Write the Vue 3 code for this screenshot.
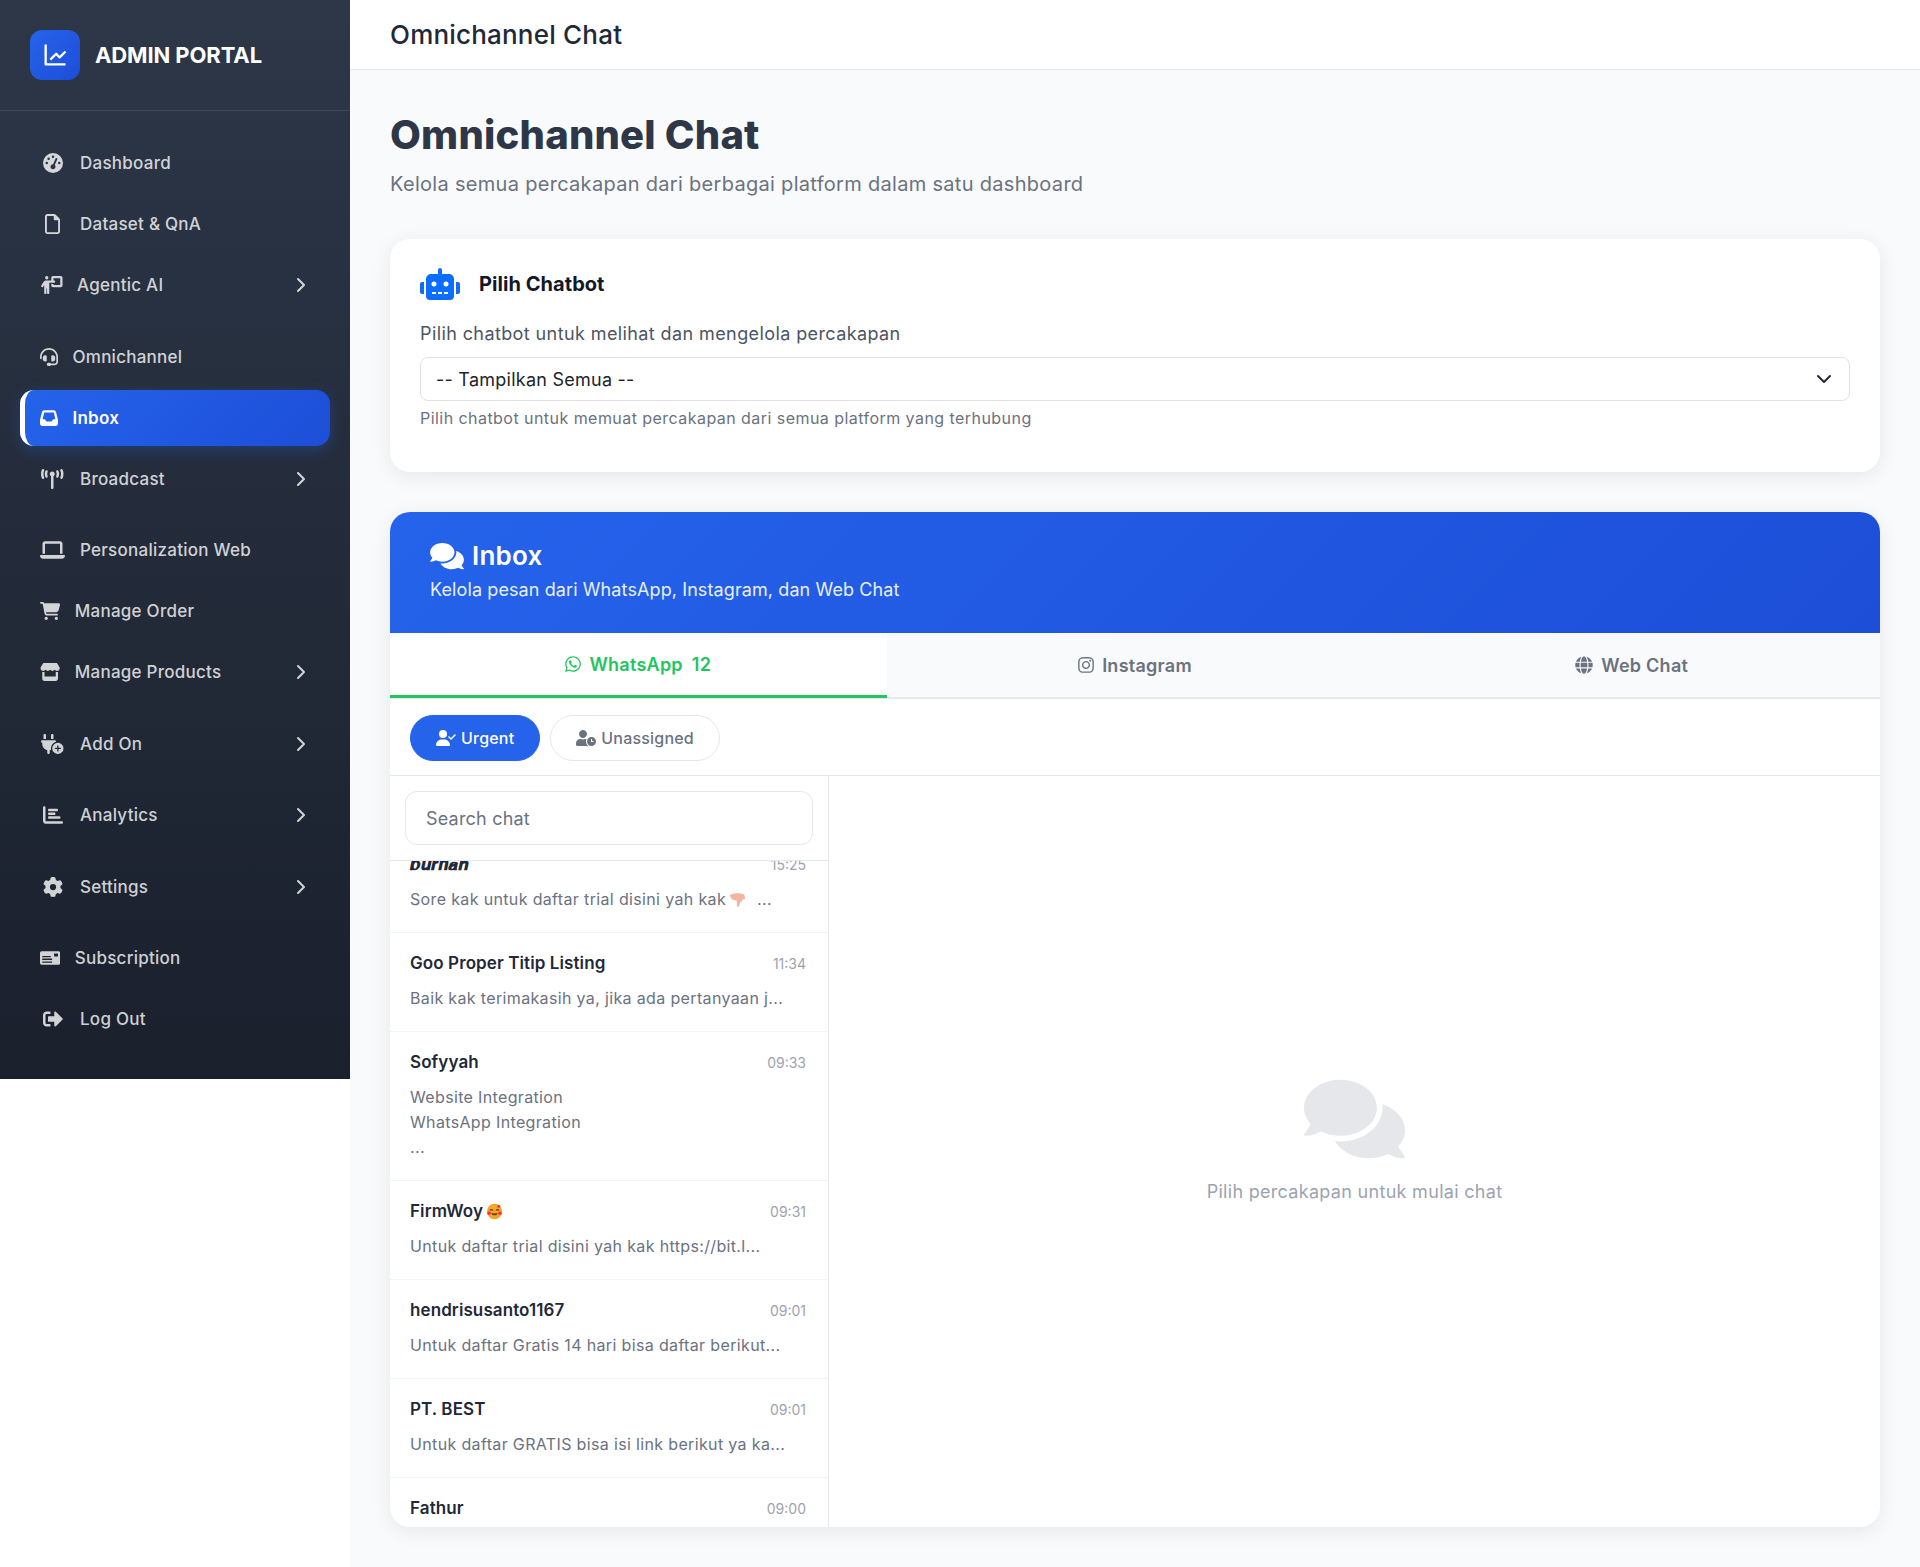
<template>
  <div class="app">
    <aside class="sidebar">
      <div class="brand">
        <div class="brand-logo">
          <svg viewBox="0 0 24 24" width="28" height="28" fill="currentColor">
            <path d="M3 3v17a1 1 0 0 0 1 1h17v-2H5V3H3z" />
            <path d="M15.293 14.707a.999.999 0 0 0 1.414 0l5-5-1.414-1.414L16 12.586l-2.293-2.293a.999.999 0 0 0-1.414 0l-5 5 1.414 1.414L13 12.414l2.293 2.293z" />
          </svg>
        </div>
        <span class="brand-name">ADMIN PORTAL</span>
      </div>
      <nav class="nav">
        <a
          v-for="item in navItems"
          :key="item.label"
          class="nav-item"
          :class="{ active: item.active, drop: item.drop }"
        >
          <span class="nav-icon" :class="item.big ? 'big' : 'small'">
            <svg :viewBox="`0 0 ${item.w} 512`" :height="item.big ? 20 : 18" :width="(item.w / 512) * (item.big ? 20 : 18)" fill="currentColor">
              <path :d="item.d" />
            </svg>
          </span>
          <span class="nav-label">{{ item.label }}</span>
          <svg v-if="item.drop" class="chev" viewBox="0 0 24 24" width="24" height="24" fill="none" stroke="currentColor" stroke-width="2" stroke-linecap="round" stroke-linejoin="round">
            <path d="M9 6l6 6-6 6" />
          </svg>
        </a>
      </nav>
    </aside>

    <div class="content">
      <header class="topbar">Omnichannel Chat</header>
      <main class="main">
        <h1>Omnichannel Chat</h1>
        <p class="subtitle">Kelola semua percakapan dari berbagai platform dalam satu dashboard</p>

        <section class="card bot-card">
          <div class="bot-head">
            <svg viewBox="0 0 640 512" width="40" height="32" fill="#0d6efd">
              <path d="M32,224H64V416H32A31.96166,31.96166,0,0,1,0,384V256A31.96166,31.96166,0,0,1,32,224Zm512-48V448a64.06328,64.06328,0,0,1-64,64H160a64.06328,64.06328,0,0,1-64-64V176a79.974,79.974,0,0,1,80-80H288V32a32,32,0,0,1,64,0V96H464A79.974,79.974,0,0,1,544,176ZM264,256a40,40,0,1,0-40,40A39.997,39.997,0,0,0,264,256Zm-8,128H192v32h64Zm96,0H288v32h64ZM456,256a40,40,0,1,0-40,40A39.997,39.997,0,0,0,456,256Zm-8,128H384v32h64ZM640,256V384a31.96166,31.96166,0,0,1-32,32H576V224h32A31.96166,31.96166,0,0,1,640,256Z" />
            </svg>
            <h2>Pilih Chatbot</h2>
          </div>
          <p class="bot-desc">Pilih chatbot untuk melihat dan mengelola percakapan</p>
          <div class="select-wrap">
            <select class="select">
              <option>-- Tampilkan Semua --</option>
            </select>
            <svg class="select-arrow" viewBox="0 0 16 16" width="16" height="16" fill="none" stroke="#1f2937" stroke-width="2" stroke-linecap="round" stroke-linejoin="round">
              <path d="M2 5l6 6 6-6" />
            </svg>
          </div>
          <p class="bot-help">Pilih chatbot untuk memuat percakapan dari semua platform yang terhubung</p>
        </section>

        <section class="card inbox">
          <div class="inbox-head">
            <h2>
              <svg viewBox="0 0 576 512" width="34" height="30" fill="currentColor"><path :d="commentsPath" /></svg>
              Inbox
            </h2>
            <p>Kelola pesan dari WhatsApp, Instagram, dan Web Chat</p>
          </div>

          <div class="tabs">
            <button class="tab on">
              <svg viewBox="0 0 448 512" width="16" height="18" fill="currentColor"><path d="M380.9 97.1C339 55.1 283.2 32 223.9 32c-122.4 0-222 99.6-222 222 0 39.1 10.2 77.3 29.6 111L0 480l117.7-30.9c32.4 17.7 68.9 27 106.1 27h.1c122.3 0 224.1-99.6 224.1-222 0-59.3-25.2-115-67.1-157zm-157 341.6c-33.2 0-65.7-8.9-94-25.7l-6.7-4-69.8 18.3L72 359.2l-4.4-7c-18.5-29.4-28.2-63.3-28.2-98.2 0-101.7 82.8-184.5 184.6-184.5 49.3 0 95.6 19.2 130.4 54.1 34.8 34.9 56.2 81.2 56.1 130.5 0 101.8-84.9 184.6-186.6 184.6zm101.2-138.2c-5.5-2.8-32.8-16.2-37.9-18-5.1-1.9-8.8-2.8-12.5 2.8-3.7 5.6-14.3 18-17.6 21.8-3.2 3.7-6.5 4.2-12 1.4-32.6-16.3-54-29.1-75.5-66-5.7-9.8 5.7-9.1 16.3-30.3 1.8-3.7.9-6.9-.5-9.7-1.4-2.8-12.5-30.1-17.1-41.2-4.5-10.8-9.1-9.3-12.5-9.5-3.2-.2-6.9-.2-10.6-.2-3.7 0-9.7 1.4-14.8 6.9-5.1 5.6-19.4 19-19.4 46.3 0 27.3 19.9 53.7 22.6 57.4 2.8 3.7 39.1 59.7 94.8 83.8 35.2 15.2 49 16.5 66.6 13.9 10.7-1.6 32.8-13.4 37.4-26.4 4.6-13 4.6-24.1 3.2-26.4-1.3-2.5-5-3.9-10.5-6.6z" /></svg>
              <span>WhatsApp</span>
              <span class="tab-count">12</span>
            </button>
            <button class="tab">
              <svg viewBox="0 0 448 512" width="16" height="18" fill="currentColor"><path d="M224.1 141c-63.6 0-114.9 51.3-114.9 114.9s51.3 114.9 114.9 114.9S339 319.5 339 255.9 287.7 141 224.1 141zm0 189.6c-41.1 0-74.7-33.5-74.7-74.7s33.5-74.7 74.7-74.7 74.7 33.5 74.7 74.7-33.6 74.7-74.7 74.7zm146.4-194.3c0 14.9-12 26.8-26.8 26.8-14.9 0-26.8-12-26.8-26.8s12-26.8 26.8-26.8 26.8 12 26.8 26.8zm76.1 27.2c-1.7-35.9-9.9-67.7-36.2-93.9-26.2-26.2-58-34.4-93.9-36.2-37-2.1-147.9-2.1-184.9 0-35.8 1.7-67.6 9.9-93.9 36.1s-34.4 58-36.2 93.9c-2.1 37-2.1 147.9 0 184.9 1.7 35.9 9.9 67.7 36.2 93.9s58 34.4 93.9 36.2c37 2.1 147.9 2.1 184.9 0 35.9-1.7 67.7-9.9 93.9-36.2 26.2-26.2 34.4-58 36.2-93.9 2.1-37 2.1-147.8 0-184.8zM398.8 388c-7.8 19.6-22.9 34.7-42.6 42.6-29.5 11.7-99.5 9-132.1 9s-102.7 2.6-132.1-9c-19.6-7.8-34.7-22.9-42.6-42.6-11.7-29.5-9-99.5-9-132.1s-2.6-102.7 9-132.1c7.8-19.6 22.9-34.7 42.6-42.6 29.5-11.7 99.5-9 132.1-9s102.7-2.6 132.1 9c19.6 7.8 34.7 22.9 42.6 42.6 11.7 29.5 9 99.5 9 132.1s2.7 102.7-9 132.1z" /></svg>
              <span>Instagram</span>
            </button>
            <button class="tab">
              <svg viewBox="0 0 496 512" width="18" height="18" fill="currentColor"><path d="M336.5 160C322 70.7 287.8 8 248 8s-74 62.7-88.5 152h177zM152 256c0 22.2 1.2 43.5 3.3 64h185.3c2.1-20.5 3.3-41.8 3.3-64s-1.2-43.5-3.3-64H155.3c-2.1 20.5-3.3 41.8-3.3 64zm324.7-96c-28.6-67.9-86.5-120.4-158-141.6 24.4 33.8 41.2 84.7 50 141.6h108zM177.2 18.4C105.8 39.6 47.8 92.1 19.3 160h108c8.7-56.9 25.5-107.8 49.9-141.6zM487.4 192H372.7c2.1 21 3.3 42.5 3.3 64s-1.2 43-3.3 64h114.6c5.5-20.5 8.6-41.8 8.6-64s-3.1-43.5-8.5-64zM120 256c0-21.5 1.2-43 3.3-64H8.6C3.2 212.5 0 233.8 0 256s3.2 43.5 8.6 64h114.6c-2-21-3.2-42.5-3.2-64zm39.5 96c14.5 89.3 48.7 152 88.5 152s74-62.7 88.5-152h-177zm159.3 141.6c71.4-21.2 129.4-73.7 158-141.6h-108c-8.8 56.9-25.6 107.8-50 141.6zM19.3 352c28.6 67.9 86.5 120.4 158 141.6-24.4-33.8-41.2-84.7-50-141.6h-108z" /></svg>
              <span>Web Chat</span>
            </button>
          </div>

          <div class="filters">
            <button class="pill on">
              <svg viewBox="0 0 640 512" width="20" height="16" fill="currentColor"><path d="M96 128a128 128 0 1 1 256 0A128 128 0 1 1 96 128zM0 482.3C0 383.8 79.8 304 178.3 304h91.4C368.2 304 448 383.8 448 482.3c0 16.4-13.3 29.7-29.7 29.7H29.7C13.3 512 0 498.7 0 482.3zM625 177L497 305c-9.4 9.4-24.6 9.4-33.9 0l-64-64c-9.4-9.4-9.4-24.6 0-33.9s24.6-9.4 33.9 0L480 254.1 591 143c9.4-9.4 24.6-9.4 33.9 0s9.4 24.6 0 33.9z" /></svg>
              Urgent
            </button>
            <button class="pill">
              <svg viewBox="0 0 640 512" width="20" height="16" fill="currentColor"><path d="M496 224c-79.6 0-144 64.4-144 144s64.4 144 144 144 144-64.4 144-144-64.4-144-144-144zm64 150.3c0 5.3-4.4 9.7-9.7 9.7h-60.6c-5.3 0-9.7-4.4-9.7-9.7v-76.6c0-5.3 4.4-9.7 9.7-9.7h12.6c5.3 0 9.7 4.4 9.7 9.7V352h38.3c5.3 0 9.7 4.4 9.7 9.7v12.6zM320 368c0-27.8 6.7-54.1 18.2-77.5-8-1.5-16.2-2.5-24.6-2.5h-16.7c-22.2 10.2-46.9 16-72.9 16s-50.6-5.8-72.9-16h-16.7C60.2 288 0 348.2 0 422.4V464c0 26.5 21.5 48 48 48h347.1c-45.3-31.9-75.1-84.5-75.1-144zm-96-112c70.7 0 128-57.3 128-128S294.7 0 224 0 96 57.3 96 128s57.3 128 128 128z" /></svg>
              Unassigned
            </button>
          </div>

          <div class="chat">
            <div class="chat-left">
              <div class="search">
                <input type="text" placeholder="Search chat" />
              </div>
              <div ref="listEl" class="list">
                <!-- the list is scrolled: rows above and below are not in view -->
                <div class="list-gap-top"></div>
                <div v-for="chat in chats" :key="chat.name" class="row">
                  <div class="row-top">
                    <span class="row-name" :class="{ fancy: chat.fancy }">
                      {{ chat.name }}
                      <svg v-if="chat.face" class="emoji" viewBox="0 0 20 20" width="17" height="17">
                        <circle cx="10" cy="10" r="9" fill="#f6a623" />
                        <path d="M5 8.5c.8-1 2-1 2.8 0M12.2 8.5c.8-1 2-1 2.8 0" fill="none" stroke="#6b3a12" stroke-width="1.4" stroke-linecap="round" />
                        <path d="M6 12c1.6 3.4 6.4 3.4 8 0z" fill="#7a3b12" />
                        <circle cx="3.6" cy="12" r="2" fill="#e8344a" />
                        <circle cx="16.4" cy="12" r="2" fill="#e8344a" />
                        <circle cx="15" cy="3.8" r="1.8" fill="#e8344a" />
                      </svg>
                    </span>
                    <span class="row-time">{{ chat.time }}</span>
                  </div>
                  <div class="row-msg">
                    <div v-for="line in chat.lines" :key="line" class="row-line">
                      {{ line }}
                      <template v-if="chat.hand">
                        <svg class="emoji" viewBox="0 0 20 20" width="17" height="17">
                          <path d="M1 5c2-2 7-3 12-2 2 .4 3.400 1 5 1l1 5-3 1c-.5 2-1.500 3-3 3.500-.3 2-.5 4-1.600 5-1.500.6-2-1-2-3l-.2-4C6 11 2 10 1 5z" fill="#f2b5a0" />
                        </svg>
                        <span class="row-dots">...</span>
                      </template>
                    </div>
                  </div>
                </div>
                <div class="list-gap-bottom"></div>
              </div>
            </div>
            <div class="chat-empty">
              <svg viewBox="0 0 576 512" width="101" height="90" fill="#e5e7eb"><path :d="commentsPath" /></svg>
              <p>Pilih percakapan untuk mulai chat</p>
            </div>
          </div>
        </section>
      </main>
    </div>
  </div>
</template>

<script setup>
import { onMounted, ref } from 'vue'

const commentsPath = 'M416 192c0-88.4-93.1-160-208-160S0 103.6 0 192c0 34.3 14.1 65.9 38 92-13.4 30.2-35.5 54.2-35.8 54.5-2.2 2.3-2.8 5.7-1.5 8.7S4.8 352 8 352c36.6 0 66.9-12.3 88.7-25 32.2 15.7 70.3 25 111.3 25 114.9 0 208-71.6 208-160zm122 220c23.9-26 38-57.7 38-92 0-66.9-53.5-124.2-129.3-148.1.9 6.6 1.3 13.3 1.3 20.1 0 105.9-107.7 192-240 192-10.8 0-21.3-.8-31.7-1.9C207.8 439.6 281.8 480 368 480c41 0 79.1-9.2 111.3-25 21.8 12.7 52.1 25 88.7 25 3.2 0 6.1-1.9 7.3-4.8 1.3-2.9.7-6.3-1.5-8.7-.3-.3-22.4-24.2-35.8-54.5z'

const navItems = [
  { label: 'Dashboard', big: true, w: 512, d: 'M0 256a256 256 0 1 1 512 0A256 256 0 1 1 0 256zM288 96a32 32 0 1 0 -64 0 32 32 0 1 0 64 0zM256 416c35.3 0 64-28.7 64-64c0-17.4-6.9-33.1-18.1-44.6L366 161.7c5.3-12.1-.2-26.3-12.3-31.6s-26.3 .2-31.6 12.3L257.9 288c-.6 0-1.3 0-1.9 0c-35.3 0-64 28.7-64 64s28.7 64 64 64zM176 144a32 32 0 1 0 -64 0 32 32 0 1 0 64 0zM96 288a32 32 0 1 0 0-64 32 32 0 1 0 0 64zm352-32a32 32 0 1 0 -64 0 32 32 0 1 0 64 0z' },
  { label: 'Dataset & QnA', big: true, w: 384, d: 'M320 464c8.8 0 16-7.2 16-16V160H256c-17.7 0-32-14.3-32-32V48H64c-8.8 0-16 7.2-16 16V448c0 8.8 7.2 16 16 16H320zM0 64C0 28.7 28.7 0 64 0H229.5c17 0 33.3 6.7 45.3 18.7l90.5 90.5c12 12 18.7 28.3 18.7 45.3V448c0 35.3-28.7 64-64 64H64c-35.3 0-64-28.7-64-64V64z' },
  { label: 'Agentic AI', drop: true, w: 640, d: 'M192 96a48 48 0 1 0 0-96 48 48 0 1 0 0 96zm-8 384V352h16V480c0 17.7 14.3 32 32 32s32-14.3 32-32V192h56 64 16c17.7 0 32-14.3 32-32s-14.3-32-32-32H384V64H576V256H384V224H320v48c0 26.500 21.500 48 48 48H592c26.500 0 48-21.500 48-48V48c0-26.500-21.500-48-48-48H368c-26.500 0-48 21.500-48 48v80H243.100 177.100c-33.700 0-64.900 17.700-82.300 46.600l-58.300 97c-9.100 15.100-4.200 34.800 10.900 43.900s34.800 4.200 43.900-10.900L120 256.900V480c0 17.700 14.300 32 32 32s32-14.300 32-32z' },
  { label: 'Omnichannel', w: 512, d: 'M256 48C141.1 48 48 141.1 48 256v40c0 13.3-10.7 24-24 24s-24-10.7-24-24V256C0 114.6 114.6 0 256 0S512 114.6 512 256V400.100c0 48.600-39.400 88-88.100 88L313.600 488c-8.300 14.300-23.800 24-41.600 24H240c-26.500 0-48-21.500-48-48s21.500-48 48-48h32c17.800 0 33.300 9.700 41.600 24l110.400 .1c22.100 0 40-17.900 40-40V256c0-114.900-93.100-208-208-208zM144 208h16c17.700 0 32 14.300 32 32V352c0 17.700-14.300 32-32 32H144c-35.300 0-64-28.700-64-64V272c0-35.300 28.700-64 64-64zm224 0c35.300 0 64 28.700 64 64v48c0 35.300-28.700 64-64 64H352c-17.700 0-32-14.300-32-32V240c0-17.700 14.300-32 32-32h16z' },
  { label: 'Inbox', active: true, w: 512, d: 'M121 32C91.600 32 66 52 58.900 80.500L1.900 308.400C.6 313.500 0 318.700 0 323.900V416c0 35.300 28.700 64 64 64H448c35.300 0 64-28.700 64-64V323.900c0-5.200-.6-10.400-1.900-15.500l-57-227.900C446 52 420.400 32 391 32H121zm0 64H391l48 192H387.800c-12.100 0-23.200 6.800-28.600 17.700l-14.300 28.600c-5.400 10.800-16.500 17.700-28.600 17.700H195.800c-12.100 0-23.200-6.800-28.600-17.700l-14.300-28.600c-5.400-10.800-16.500-17.700-28.600-17.700H73L121 96z' },
  { label: 'Broadcast', big: true, drop: true, w: 576, d: 'M80.300 44C69.800 69.900 64 98.200 64 128s5.800 58.100 16.300 84c6.600 16.400-1.300 35-17.700 41.700s-35-1.300-41.700-17.700C7.400 202.600 0 166.100 0 128S7.400 53.400 20.900 20C27.600 3.600 46.200-4.300 62.600 2.300S86.900 27.600 80.300 44zM555.100 20C568.600 53.400 576 89.900 576 128s-7.400 74.600-20.900 108c-6.600 16.400-25.300 24.300-41.700 17.700S489.100 228.400 495.700 212c10.500-25.900 16.300-54.200 16.300-84s-5.800-58.100-16.300-84C489.100 27.600 497 9 513.400 2.300s35 1.300 41.700 17.700zM352 128c0 23.700-12.900 44.400-32 55.400V480c0 17.700-14.300 32-32 32s-32-14.300-32-32V183.400c-19.100-11.100-32-31.700-32-55.400c0-35.300 28.700-64 64-64s64 28.700 64 64zM170.600 76.800C163.800 92.400 160 109.700 160 128s3.800 35.600 10.600 51.200c7.100 16.200-.3 35.100-16.500 42.100s-35.100-.3-42.100-16.500c-10.300-23.600-16-49.600-16-76.800s5.700-53.200 16-76.800c7.100-16.200 25.900-23.600 42.100-16.500s23.600 25.900 16.500 42.100zM464 128c0 27.200-5.700 53.200-16 76.800c-7.100 16.200-25.900 23.600-42.100 16.500s-23.600-25.900-16.500-42.100c6.800-15.600 10.600-32.900 10.600-51.200s-3.800-35.600-10.600-51.200c-7.100-16.200 .3-35.100 16.500-42.100s35.100 .3 42.100 16.500c10.300 23.600 16 49.600 16 76.800z' },
  { label: 'Personalization Web', big: true, w: 640, d: 'M128 32C92.700 32 64 60.700 64 96V352h64V96H512V352h64V96c0-35.300-28.700-64-64-64H128zM19.200 384C8.600 384 0 392.600 0 403.200C0 445.600 34.400 480 76.800 480H563.200c42.400 0 76.800-34.400 76.800-76.800c0-10.600-8.600-19.200-19.200-19.200H19.200z' },
  { label: 'Manage Order', w: 576, d: 'M0 24C0 10.700 10.700 0 24 0H69.500c22 0 41.500 12.800 50.600 32h411c26.300 0 45.500 25 38.600 50.400l-41 152.300c-8.500 31.400-37 53.300-69.500 53.300H170.700l5.400 28.500c2.200 11.300 12.100 19.500 23.600 19.500H488c13.300 0 24 10.700 24 24s-10.700 24-24 24H199.700c-34.600 0-64.300-24.600-70.700-58.500L77.400 54.500c-.7-3.800-4-6.500-7.900-6.500H24C10.700 48 0 37.300 0 24zM128 464a48 48 0 1 1 96 0 48 48 0 1 1 -96 0zm336-48a48 48 0 1 1 0 96 48 48 0 1 1 0-96z' },
  { label: 'Manage Products', drop: true, w: 576, d: 'M547.600 103.800L490.300 13.100C485.200 5 476.100 0 466.400 0H109.600C99.900 0 90.800 5 85.700 13.100L28.300 103.800c-29.600 46.800-3.400 111.900 51.900 119.400c4 .5 8.100 .8 12.100 .8c26.100 0 49.300-11.400 65.200-29c15.900 17.600 39.100 29 65.200 29c26.100 0 49.300-11.400 65.200-29c15.900 17.600 39.100 29 65.200 29c26.200 0 49.300-11.400 65.200-29c16 17.600 39.100 29 65.200 29c4.100 0 8.100-.3 12.100-.8c55.500-7.400 81.800-72.500 52.100-119.400zM499.700 254.900l-.1 0c-5.300 .7-10.700 1.100-16.200 1.100c-12.400 0-24.300-1.900-35.400-5.300V384H128V250.600c-11.200 3.500-23.200 5.400-35.600 5.400c-5.500 0-11-.4-16.300-1.100l-.1 0c-4.100-.6-8.100-1.300-12-2.300V384v64c0 35.300 28.700 64 64 64H448c35.300 0 64-28.700 64-64V384 252.600c-4 1-8 1.800-12.300 2.300z' },
  { label: 'Add On', big: true, drop: true, w: 576, d: 'M96 0C78.300 0 64 14.300 64 32v96h64V32c0-17.700-14.300-32-32-32zM288 0c-17.700 0-32 14.300-32 32v96h64V32c0-17.700-14.300-32-32-32zM32 160c-17.700 0-32 14.300-32 32s14.300 32 32 32v32c0 77.400 55 142 128 156.800V480c0 17.700 14.300 32 32 32s32-14.300 32-32V412.800c12.300-2.500 24.100-6.400 35.100-11.500c-2.100-10.800-3.100-21.900-3.100-33.300c0-80.300 53.800-148 127.300-169.200c.5-2.200 .7-4.500 .7-6.800c0-17.700-14.300-32-32-32H32zM432 512a144 144 0 1 0 0-288 144 144 0 1 0 0 288zm16-208v48h48c8.800 0 16 7.200 16 16s-7.200 16-16 16H448v48c0 8.800-7.200 16-16 16s-16-7.200-16-16V384H368c-8.800 0-16-7.200-16-16s7.200-16 16-16h48V304c0-8.800 7.200-16 16-16s16 7.200 16 16z' },
  { label: 'Analytics', big: true, drop: true, w: 512, d: 'M32 32c17.700 0 32 14.300 32 32V400c0 8.800 7.200 16 16 16H480c17.700 0 32 14.300 32 32s-14.300 32-32 32H80c-44.200 0-80-35.800-80-80V64C0 46.300 14.300 32 32 32zm96 96c0-17.700 14.300-32 32-32l192 0c17.700 0 32 14.300 32 32s-14.300 32-32 32l-192 0c-17.700 0-32-14.300-32-32zm32 64H288c17.700 0 32 14.300 32 32s-14.300 32-32 32H160c-17.700 0-32-14.300-32-32s14.300-32 32-32zm0 96H416c17.700 0 32 14.300 32 32s-14.300 32-32 32H160c-17.700 0-32-14.300-32-32s14.300-32 32-32z' },
  { label: 'Settings', big: true, drop: true, w: 512, d: 'M495.900 166.600c3.200 8.700 .5 18.400-6.400 24.600l-43.300 39.400c1.100 8.300 1.700 16.800 1.700 25.400s-.6 17.100-1.700 25.400l43.300 39.400c6.900 6.200 9.600 15.900 6.400 24.600c-4.400 11.900-9.700 23.300-15.800 34.300l-4.700 8.100c-6.600 11-14 21.400-22.100 31.200c-5.900 7.200-15.700 9.600-24.500 6.800l-55.700-17.700c-13.400 10.300-28.200 18.900-44 25.400l-12.500 57.100c-2 9.100-9 16.300-18.200 17.800c-13.800 2.300-28 3.500-42.500 3.500s-28.700-1.200-42.500-3.500c-9.200-1.500-16.200-8.700-18.200-17.800l-12.500-57.100c-15.800-6.500-30.600-15.100-44-25.400L83.100 425.900c-8.800 2.800-18.600 .3-24.500-6.800c-8.100-9.800-15.500-20.200-22.100-31.200l-4.700-8.100c-6.100-11-11.400-22.400-15.800-34.300c-3.200-8.700-.5-18.400 6.400-24.600l43.300-39.400C64.600 273.100 64 264.600 64 256s.6-17.100 1.700-25.400L22.400 191.200c-6.900-6.200-9.600-15.900-6.400-24.600c4.400-11.900 9.700-23.300 15.800-34.300l4.700-8.100c6.600-11 14-21.400 22.100-31.200c5.900-7.200 15.700-9.600 24.500-6.800l55.700 17.700c13.400-10.300 28.200-18.900 44-25.400l12.500-57.100c2-9.100 9-16.300 18.200-17.800C227.300 1.200 241.500 0 256 0s28.700 1.200 42.500 3.500c9.200 1.500 16.200 8.700 18.200 17.800l12.500 57.100c15.800 6.500 30.600 15.100 44 25.400l55.700-17.700c8.800-2.800 18.600-.3 24.500 6.800c8.100 9.800 15.500 20.200 22.100 31.200l4.700 8.100c6.100 11 11.400 22.400 15.800 34.300zM256 336a80 80 0 1 0 0-160 80 80 0 1 0 0 160z' },
  { label: 'Subscription', w: 576, d: 'M48 64h480a48 48 0 0 1 48 48v288a48 48 0 0 1-48 48H48a48 48 0 0 1-48-48V112a48 48 0 0 1 48-48zM64 272v40h280v-40H64zm0 84v32h280v-32H64zM400 128v88h112v-88H400zM64 200v32h240v-32H64z' },
  { label: 'Log Out', big: true, w: 512, d: 'M497 273L329 441c-15 15-41 4.500-41-17v-96H152c-13.300 0-24-10.700-24-24v-96c0-13.300 10.700-24 24-24h136V88c0-21.400 25.900-32 41-17l168 168c9.300 9.400 9.300 24.600 0 34zM192 436v-40c0-6.600-5.400-12-12-12H96c-17.700 0-32-14.300-32-32V160c0-17.700 14.300-32 32-32h84c6.600 0 12-5.400 12-12V76c0-6.600-5.400-12-12-12H96c-53 0-96 43-96 96v192c0 53 43 96 96 96h84c6.600 0 12-5.400 12-12z' }
]

const chats = [
  { name: '𝒃𝒖𝒓𝒉𝒂𝒏', fancy: true, time: '15:25', hand: true, lines: ['Sore kak untuk daftar trial disini yah kak'] },
  { name: 'Goo Proper Titip Listing', time: '11:34', lines: ['Baik kak terimakasih ya, jika ada pertanyaan j...'] },
  { name: 'Sofyyah', time: '09:33', lines: ['Website Integration', 'WhatsApp Integration', '...'] },
  { name: 'FirmWoy', face: true, time: '09:31', lines: ['Untuk daftar trial disini yah kak https://bit.l...'] },
  { name: 'hendrisusanto1167', time: '09:01', lines: ['Untuk daftar Gratis 14 hari bisa daftar berikut...'] },
  { name: 'PT. BEST', time: '09:01', lines: ['Untuk daftar GRATIS bisa isi link berikut ya ka...'] },
  { name: 'Fathur', time: '09:00', lines: ['Baik kak, silakan daftar melalui link berikut...'] }
]

const listEl = ref(null)

onMounted(() => {
  listEl.value.scrollTop = 123
})
</script>

<style>
html,
body {
  margin: 0;
  background: #fff;
}
</style>

<style scoped>
.app {
  display: flex;
  align-items: flex-start;
  min-height: 1567px;
  font-family: Inter, "Noto Sans", sans-serif;
  color: #1f2937;
}

.sidebar {
  width: 350px;
  flex: none;
  height: 1079px;
  background: linear-gradient(180deg, #2d3748 0%, #1a202c 100%);
}

.brand {
  display: flex;
  align-items: center;
  gap: 15px;
  padding: 30px;
  border-bottom: 1px solid rgba(255, 255, 255, 0.1);
}

.brand-logo {
  width: 50px;
  height: 50px;
  border-radius: 12px;
  background: linear-gradient(135deg, #2563eb, #1d4ed8);
  color: #fff;
  display: flex;
  align-items: center;
  justify-content: center;
}

.brand-name {
  color: #fff;
  font-size: 22px;
  font-weight: 700;
  letter-spacing: -0.1px;
}

.nav {
  padding: 24px 20px 0;
  display: flex;
  flex-direction: column;
}

.nav-item {
  height: 56px;
  margin-bottom: 5px;
  padding: 0 20px;
  border-radius: 14px;
  display: flex;
  align-items: center;
  color: rgba(255, 255, 255, 0.8);
  font-size: 17px;
  font-weight: 500;
  letter-spacing: 0.25px;
  box-sizing: border-box;
}

.nav-item.drop {
  margin-bottom: 15.500px;
}

.nav-item.active {
  background: linear-gradient(135deg, #2563eb, #1d4ed8);
  border-left: 5px solid #fff;
  padding-left: 15px;
  color: #fff;
  font-weight: 600;
  box-shadow: 0 4px 15px rgba(37, 99, 235, 0.3);
}

.nav-icon {
  display: flex;
  align-items: center;
  justify-content: center;
  flex: none;
}

.nav-icon.big {
  width: 25px;
  margin-right: 15px;
}

.nav-icon.small {
  margin-right: 14.500px;
}

.nav-label {
  flex: 1;
}

.chev {
  margin-right: -3px;
}

.content {
  flex: 1;
  min-width: 0;
  background: #f9fafb;
  min-height: 1567px;
}

.topbar {
  height: 70px;
  box-sizing: border-box;
  padding: 0 40px;
  display: flex;
  align-items: center;
  background: #fff;
  border-bottom: 1px solid #e5e7eb;
  font-size: 26px;
  font-weight: 500;
  letter-spacing: 0.2px;
  color: #1f2937;
}

.main {
  padding: 35px 40px 40px;
}

h1 {
  margin: 0;
  font-size: 40px;
  line-height: 60px;
  font-weight: 800;
  color: #2d3748;
  letter-spacing: 0.2px;
}

.subtitle {
  margin: 4px 0 0;
  font-size: 20px;
  line-height: 30px;
  color: #6b7280;
  letter-spacing: 0.3px;
}

.card {
  background: #fff;
  border-radius: 20px;
  box-shadow: 0 4px 20px rgba(0, 0, 0, 0.08);
}

.bot-card {
  margin-top: 40px;
  padding: 30px;
  height: 233px;
  box-sizing: border-box;
}

.bot-head {
  display: flex;
  align-items: center;
  gap: 19px;
  height: 30px;
}

.bot-head h2 {
  margin: 0;
  font-size: 20px;
  font-weight: 700;
  color: #111827;
  letter-spacing: 0.05px;
}

.bot-desc {
  margin: 22px 0 0;
  font-size: 18px;
  line-height: 26px;
  color: #4b5563;
  letter-spacing: 0.4px;
}

.select-wrap {
  position: relative;
  margin-top: 10px;
}

.select {
  display: block;
  width: 100%;
  height: 44px;
  padding: 0 15px;
  border: 1px solid #dee2e6;
  border-radius: 8px;
  background: #fff;
  appearance: none;
  font-family: inherit;
  font-size: 18px;
  letter-spacing: 0.25px;
  color: #212529;
}

.select-arrow {
  position: absolute;
  right: 18px;
  top: 14px;
}

.bot-help {
  margin: 6px 0 0;
  font-size: 16px;
  line-height: 22px;
  color: #6b7280;
  letter-spacing: 0.45px;
}

.inbox {
  margin-top: 40px;
  height: 1015px;
  overflow: hidden;
}

.inbox-head {
  height: 121px;
  box-sizing: border-box;
  padding: 26px 40px 0;
  background: linear-gradient(135deg, #2563eb, #1d4ed8);
  color: #fff;
}

.inbox-head h2 {
  margin: 0;
  display: flex;
  align-items: center;
  gap: 8px;
  font-size: 26px;
  line-height: 36px;
  font-weight: 600;
  letter-spacing: 0.2px;
}

.inbox-head p {
  margin: 3px 0 0;
  font-size: 18px;
  line-height: 26px;
  opacity: 0.9;
  letter-spacing: 0.1px;
}

.tabs {
  display: grid;
  grid-template-columns: repeat(3, 1fr);
  height: 66px;
  background: #f9fafb;
  border-bottom: 2px solid #e5e7eb;
  box-sizing: border-box;
}

.tab {
  height: 64px;
  border: none;
  background: none;
  display: flex;
  align-items: center;
  justify-content: center;
  gap: 8px;
  font-family: inherit;
  font-size: 18px;
  font-weight: 600;
  color: #6b7280;
  letter-spacing: 0.25px;
  padding: 0;
}

.tab.on {
  height: 65px;
  background: #fff;
  color: #22c55e;
  border-bottom: 3px solid #22c55e;
}

.tab-count {
  margin-left: 1px;
}

.filters {
  height: 77px;
  box-sizing: border-box;
  padding: 16px 20px;
  display: flex;
  gap: 10px;
  border-bottom: 1px solid #e5e7eb;
}

.pill {
  height: 46px;
  padding: 0 25px;
  border-radius: 23px;
  border: 1.500px solid #e5e7eb;
  background: #fff;
  display: flex;
  align-items: center;
  gap: 5px;
  font-family: inherit;
  font-size: 16px;
  font-weight: 500;
  color: #6b7280;
  letter-spacing: 0.2px;
}

.pill.on {
  background: #2563eb;
  border-color: #2563eb;
  color: #fff;
}

.chat {
  display: flex;
  height: 751px;
}

.chat-left {
  width: 438px;
  flex: none;
  border-right: 1px solid #e5e7eb;
  display: flex;
  flex-direction: column;
  min-height: 0;
}

.search {
  padding: 15px;
  border-bottom: 1px solid #e5e7eb;
  height: 85px;
  box-sizing: border-box;
}

.search input {
  display: block;
  width: 100%;
  height: 54px;
  box-sizing: border-box;
  border: 1.500px solid #e5e7eb;
  border-radius: 12px;
  padding: 0 20px;
  font-family: inherit;
  font-size: 18px;
  letter-spacing: 0.2px;
  outline: none;
}

.search input::placeholder {
  color: #6b7280;
  opacity: 1;
}

.list {
  flex: 1;
  min-height: 0;
  overflow-y: scroll;
}

.list::-webkit-scrollbar {
  width: 7px;
}

.list::-webkit-scrollbar-track {
  background: #f8fafc;
}

.list::-webkit-scrollbar-thumb {
  background: #cbd5e1;
  border-radius: 4px;
}

.list-gap-top {
  height: 96px;
}

.list-gap-bottom {
  height: 2889px;
}

.row {
  padding: 20px 22px 20px 20px;
  border-bottom: 1px solid #f3f4f6;
}

.row-top {
  display: flex;
  justify-content: space-between;
  align-items: baseline;
  height: 27px;
  margin-bottom: 6px;
}

.row-name {
  font-size: 17px;
  font-weight: 600;
  color: #1f2937;
  letter-spacing: 0.1px;
  display: flex;
  align-items: center;
  gap: 3px;
}

.row-name.fancy {
  font-family: "DejaVu Serif", serif;
}

.row-time {
  font-size: 14px;
  color: #9ca3af;
}

.row-line {
  font-size: 16px;
  line-height: 25px;
  color: #6b7280;
  white-space: nowrap;
  overflow: hidden;
  letter-spacing: 0.35px;
  display: flex;
  align-items: center;
  gap: 3px;
}

.row-dots {
  margin-left: 8px;
}

.emoji {
  flex: none;
}

.chat-empty {
  flex: 1;
  display: flex;
  flex-direction: column;
  align-items: center;
  justify-content: center;
  padding-bottom: 24px;
}

.chat-empty p {
  margin: 14px 0 0;
  font-size: 18px;
  line-height: 28px;
  color: #9ca3af;
  letter-spacing: 0.3px;
}
</style>
